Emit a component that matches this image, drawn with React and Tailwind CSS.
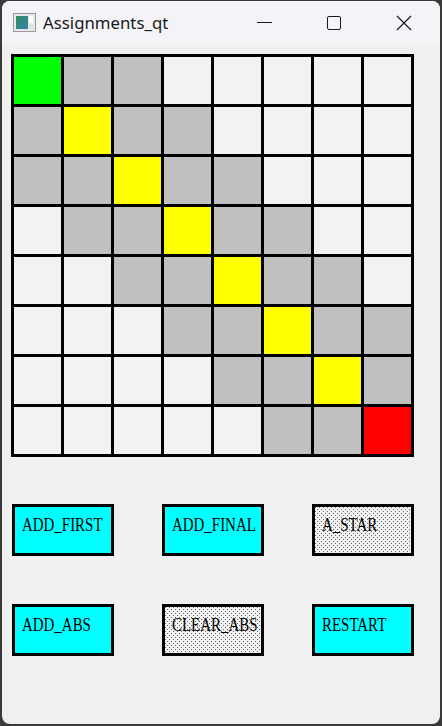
import React from "react";

const G = "g", Y = "y", R = "r", S = "s", W = "w";
const rows = [
  [G, S, S, W, W, W, W, W],
  [S, Y, S, S, W, W, W, W],
  [S, S, Y, S, S, W, W, W],
  [W, S, S, Y, S, S, W, W],
  [W, W, S, S, Y, S, S, W],
  [W, W, W, S, S, Y, S, S],
  [W, W, W, W, S, S, Y, S],
  [W, W, W, W, W, S, S, R],
];

const colorClass = {
  g: "bg-[#00ff00]",
  y: "bg-[#ffff00]",
  r: "bg-[#ff0000]",
  s: "bg-[#c0c0c0]",
  w: "bg-[#f2f2f2]",
};

function Btn({ label, dotted }) {
  return (
    <div
      className={
        "w-[102px] h-[52px] border-[3px] border-black pl-[7px] pt-[6px] " +
        (dotted
          ? "bg-[#f2f2f2] bg-[radial-gradient(circle_at_0.5px_0.5px,#666_0.55px,transparent_0.75px),radial-gradient(circle_at_2.5px_2.5px,#666_0.55px,transparent_0.75px)] bg-[length:4px_4px]"
          : "bg-[#00ffff]")
      }
    >
      <span
        className="inline-block origin-left scale-x-[0.83] text-[18px] leading-[18px] text-black whitespace-nowrap"
        style={{ fontFamily: '"Liberation Serif", serif' }}
      >
        {label}
      </span>
    </div>
  );
}

export default function App() {
  return (
    <div className="w-[442px] h-[726px] bg-[#3a3a3a] pt-[1px] px-[2px] pb-[2px] overflow-hidden">
      <div className="w-full h-full rounded-[8px] overflow-hidden bg-[#f0f0f0] flex flex-col">
        {/* title bar */}
        <div className="h-[43px] bg-[#f3f3f8] flex items-center shrink-0">
          <div className="ml-[11px] w-[23px] h-[19px] border border-[#9a9a9a] bg-[#e8e8e8] p-[2px] flex gap-[1px]">
            <div className="w-[12px] h-full bg-[linear-gradient(135deg,#2f8f5a,#3a7fb0)]" />
            <div className="flex-1 flex flex-col gap-[1px]">
              <div className="h-[7px] bg-white" />
              <div className="flex-1 bg-[#d8e8d8]" />
            </div>
          </div>
          <div
            className="ml-[7px] text-[16.8px] text-[#1a1a1a]"
            style={{ fontFamily: '"Noto Sans", "Open Sans", sans-serif' }}
          >
            Assignments_qt
          </div>
          <div className="flex-1" />
          <div className="w-[70px] h-full flex items-center justify-center">
            <div className="w-[15px] h-[1px] bg-[#1a1a1a]" />
          </div>
          <div className="w-[70px] h-full flex items-center justify-center">
            <div className="w-[14px] h-[14px] border border-[#1a1a1a] rounded-[2px]" />
          </div>
          <div className="w-[70px] h-full flex items-center justify-center mr-[1px]">
            <svg width="16" height="16" viewBox="0 0 16 16">
              <path d="M1 1 L15 15 M15 1 L1 15" stroke="#1a1a1a" strokeWidth="1.2" />
            </svg>
          </div>
        </div>

        {/* body */}
        <div className="pl-[9px] pt-[10px]">
          <div className="w-[403px] bg-black p-[3px] grid grid-cols-8 gap-[3px]">
            {rows.flat().map((c, i) => (
              <div key={i} className={"h-[47px] " + colorClass[c]} />
            ))}
          </div>

          <div className="mt-[47px] ml-[1px] flex flex-col gap-[48px]">
            <div className="flex gap-[48px]">
              <Btn label="ADD_FIRST" />
              <Btn label="ADD_FINAL" />
              <Btn label="A_STAR" dotted />
            </div>
            <div className="flex gap-[48px]">
              <Btn label="ADD_ABS" />
              <Btn label="CLEAR_ABS" dotted />
              <Btn label="RESTART" />
            </div>
          </div>
        </div>
      </div>
    </div>
  );
}
